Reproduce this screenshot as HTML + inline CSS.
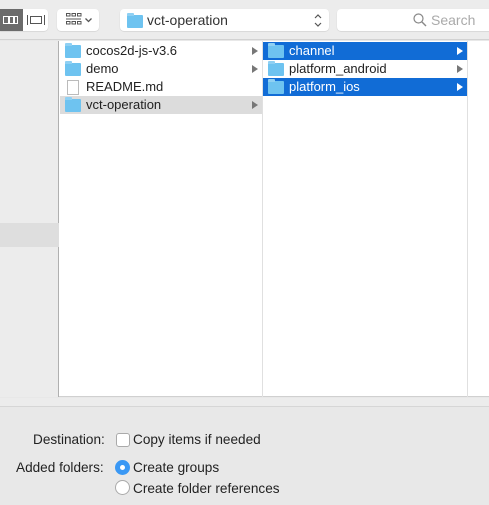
<!DOCTYPE html>
<html><head><style>
*{margin:0;padding:0;box-sizing:border-box}
body{width:489px;height:505px;overflow:hidden;background:#e8e8e8;font-family:"Liberation Sans",sans-serif;font-size:13px;color:#222;position:relative}
.abs{position:absolute}
.btn{position:absolute;background:#fff;border-radius:4px;box-shadow:0 0.5px 1px rgba(0,0,0,.15)}
.fold{position:absolute;width:16px;height:13px;background:#6ec3f0;border-radius:1px}
.fold:before{content:"";position:absolute;left:0;top:-2px;width:7px;height:3px;background:#8fd0f3;border-radius:1px 1px 0 0}
.row{position:absolute;height:18px;line-height:18px;width:100%}
.row .t{position:absolute;left:26px;top:0}
.row .fold{left:5px;top:3px}
.arr{position:absolute;right:4px;top:5px;width:0;height:0;border-left:6px solid #777;border-top:4px solid transparent;border-bottom:4px solid transparent}
.sel{background:#116cd6;color:#fff}
.sel .arr{border-left-color:#fff}
.opt{font-size:13.6px}
</style></head><body>
<div class="abs" style="left:0;top:0;width:489px;height:40px;background:#ececec;border-bottom:1px solid #d2d2d2"></div>
<div class="btn" style="left:0;top:9px;width:48px;height:22px;border-radius:0 4px 4px 0;overflow:hidden">
 <div class="abs" style="left:0;top:0;width:23px;height:22px;background:#6b6b6b"></div>
 <div class="abs" style="left:3px;top:7px;width:15px;height:8px;border:1.5px solid #fff"></div>
 <div class="abs" style="left:8px;top:7px;width:1.5px;height:8px;background:#fff"></div>
 <div class="abs" style="left:13px;top:7px;width:1.5px;height:8px;background:#fff"></div>
 <div class="abs" style="left:30px;top:7px;width:12px;height:8px;border:1.5px solid #555"></div>
 <div class="abs" style="left:27px;top:6px;width:1px;height:10px;background:#555"></div>
 <div class="abs" style="left:44px;top:6px;width:1px;height:10px;background:#555"></div>
</div>
<div class="btn" style="left:57px;top:9px;width:42px;height:22px">
 <svg class="abs" style="left:9px;top:4px" width="16" height="14" viewBox="0 0 16 14" fill="none" stroke="#555" stroke-width="1">
  <rect x="0.5" y="0.5" width="3.5" height="2.5"/><rect x="6" y="0.5" width="3.5" height="2.5"/><rect x="11.5" y="0.5" width="3.5" height="2.5"/>
  <line x1="0" y1="6" x2="15" y2="6"/>
  <rect x="0.5" y="8.5" width="3.5" height="2.5"/><rect x="6" y="8.5" width="3.5" height="2.5"/><rect x="11.5" y="8.5" width="3.5" height="2.5"/>
 </svg>
 <svg class="abs" style="left:28px;top:9px" width="7" height="5" viewBox="0 0 7 5"><path d="M0.5 0.5 L3.5 3.5 L6.5 0.5" fill="none" stroke="#555" stroke-width="1.3"/></svg>
</div>
<div class="btn" style="left:120px;top:9px;width:209px;height:22px">
 <div class="fold" style="left:7px;top:6px"></div>
 <div class="abs" style="left:27px;top:3px;font-size:14px;color:#333">vct-operation</div>
 <svg class="abs" style="left:194px;top:5px" width="8" height="13" viewBox="0 0 8 13"><path d="M1 4 L4 1 L7 4 M1 9 L4 12 L7 9" fill="none" stroke="#555" stroke-width="1.2"/></svg>
</div>
<div class="btn" style="left:337px;top:9px;width:160px;height:22px">
 <svg class="abs" style="left:76px;top:4px" width="14" height="14" viewBox="0 0 14 14"><circle cx="5.5" cy="5.5" r="4.5" fill="none" stroke="#888" stroke-width="1.2"/><line x1="9" y1="9" x2="13" y2="13" stroke="#888" stroke-width="1.4"/></svg>
 <div class="abs" style="left:94px;top:3px;font-size:14px;color:#aaa">Search</div>
</div>
<!-- browser -->
<div class="abs" style="left:0;top:41px;width:489px;height:356px;background:#fff;border-bottom:1px solid #d0d0d0"></div>
<div class="abs" style="left:0;top:41px;width:59px;height:356px;background:#ececec;border-right:1px solid #b0b0b0"></div>
<div class="abs" style="left:0;top:223px;width:59px;height:24px;background:#dedede"></div>
<div class="abs" style="left:262px;top:41px;width:1px;height:356px;background:#e0e0e0"></div>
<div class="abs" style="left:467px;top:41px;width:1px;height:356px;background:#e0e0e0"></div>
<div class="abs" style="left:60px;top:42px;width:202px;height:80px">
 <div class="row" style="top:0"><div class="fold"></div><span class="t">cocos2d-js-v3.6</span><div class="arr"></div></div>
 <div class="row" style="top:18px"><div class="fold"></div><span class="t">demo</span><div class="arr"></div></div>
 <div class="row" style="top:36px"><div class="abs" style="left:7px;top:2px;width:12px;height:15px;border:1px solid #bbb;background:#fff"></div><span class="t">README.md</span></div>
 <div class="row" style="top:54px;background:#dcdcdc"><div class="fold"></div><span class="t">vct-operation</span><div class="arr"></div></div>
</div>
<div class="abs" style="left:263px;top:42px;width:204px;height:80px">
 <div class="row sel" style="top:0"><div class="fold"></div><span class="t">channel</span><div class="arr"></div></div>
 <div class="row" style="top:18px"><div class="fold"></div><span class="t">platform_android</span><div class="arr"></div></div>
 <div class="row sel" style="top:36px"><div class="fold"></div><span class="t">platform_ios</span><div class="arr"></div></div>
</div>
<div class="abs" style="left:0;top:398px;width:489px;height:9px;background:#ececec;border-bottom:1px solid #d6d6d6"></div>
<!-- options -->
<div class="abs opt" style="left:33px;top:432px">Destination:</div>
<div class="abs" style="left:116px;top:433px;width:14px;height:14px;border:1px solid #aaa;border-radius:3px;background:#fff"></div>
<div class="abs opt" style="left:133px;top:432px">Copy items if needed</div>
<div class="abs opt" style="left:16px;top:460px">Added folders:</div>
<div class="abs" style="left:115px;top:460px;width:15px;height:15px;border-radius:50%;background:#3a98f4"></div>
<div class="abs" style="left:120px;top:465px;width:5px;height:5px;border-radius:50%;background:#fff"></div>
<div class="abs opt" style="left:133px;top:460px">Create groups</div>
<div class="abs" style="left:115px;top:480px;width:15px;height:15px;border-radius:50%;background:#fff;border:1px solid #aaa"></div>
<div class="abs opt" style="left:133px;top:481px">Create folder references</div>
</body></html>
